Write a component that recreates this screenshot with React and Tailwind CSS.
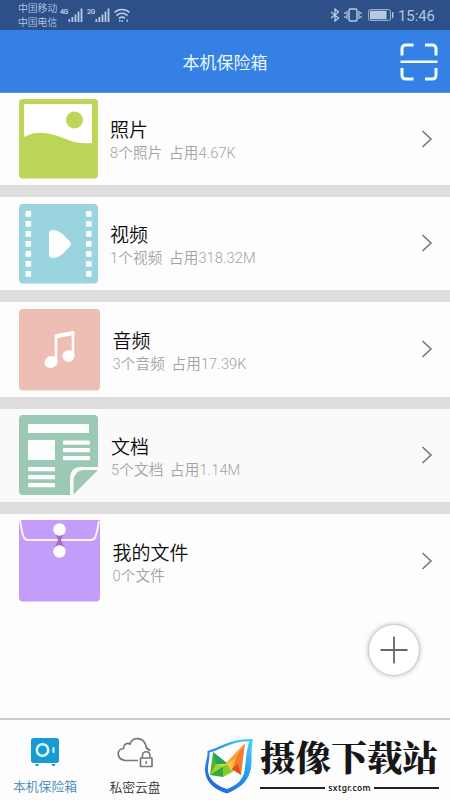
import React from "react";

function Signal() {
  return (
    <svg width="15" height="14" viewBox="0 0 15 14" fill="#b9cbe6">
      <rect x="0.5" y="11" width="1.6" height="3" />
      <rect x="3.5" y="9" width="1.8" height="5" />
      <rect x="6.6" y="6.5" width="1.8" height="7.5" />
      <rect x="9.6" y="3.5" width="1.8" height="10.5" />
      <rect x="12.6" y="0.5" width="1.8" height="13.5" />
    </svg>
  );
}

function StatusBar() {
  return (
    <div className="flex h-[30px] items-start bg-[#2d5088] text-[#b3c5e2]">
      <div className="ml-[18px] w-[42px] pt-[2px] text-[9.8px] leading-[13.5px] font-[350] whitespace-nowrap">
        <div>中国移动</div>
        <div>中国电信</div>
      </div>
      <div className="mt-[8px] w-[8px] text-[7px] leading-[8px] font-bold tracking-[-0.5px]">4G</div>
      <div className="mt-2"><Signal /></div>
      <div className="mt-[8px] ml-[4px] w-[8px] text-[7px] leading-[8px] font-bold tracking-[-0.5px]">2G</div>
      <div className="mt-2"><Signal /></div>
      <svg className="mt-[8px] ml-[3px]" width="18" height="15" viewBox="0 0 18 15" fill="none" stroke="#b9cbe6" strokeWidth="1.5">
        <path d="M1.500 4.600C5.500.5 12.500.5 16.500 4.600" />
        <path d="M3.500 7.600C6.800 4.600 11.200 4.600 14.500 7.600" />
        <path d="M6 10.400C7.800 8.900 10.200 8.900 12 10.400" />
        <path d="M6.800 11.800v2.200M9.200 12v2M14.200 11.500v2.500" strokeWidth="1.200" />
      </svg>
      <div className="mr-[15px] ml-auto flex h-[30px] items-center">
        <svg width="10" height="14" viewBox="0 0 10 14" fill="none" stroke="#b9cbe6" strokeWidth="1.300">
          <path d="M1 4l7.500 6L5 13V1l3.500 3L1 10" />
        </svg>
        <svg className="ml-[4px]" width="18" height="14" viewBox="0 0 18 14" fill="none" stroke="#b9cbe6" strokeWidth="1.400">
          <rect x="5" y="1" width="8" height="12" rx="1" />
          <path d="M3 3v8M15 3v8" strokeWidth="1.200" />
          <path d="M1 4v2M1 8v2M17 4v2M17 8v2" strokeWidth="1.200" />
        </svg>
        <svg className="ml-[6px]" width="26" height="12" viewBox="0 0 26 12">
          <rect x=".6" y=".6" width="21.800" height="10.800" rx="1.500" fill="none" stroke="#9fb4d6" strokeWidth="1" />
          <rect x="2" y="1.800" width="16.500" height="8.400" fill="#b9c9e0" />
          <rect x="24" y="3" width="1.300" height="6" fill="#b9cbe6" />
        </svg>
        <div className="ml-[4px] w-[37px] pt-[2px] text-[14.800px] leading-5 whitespace-nowrap">15:46</div>
      </div>
    </div>
  );
}

function Header() {
  return (
    <div className="grid h-[63px] grid-cols-[1fr_90px_1fr] items-center border-b border-[#5d93d0] bg-[#3480e5]">
      <div />
      <div className="pt-[3px] text-center text-[17px] leading-6 whitespace-nowrap text-[#eaf8ff]">本机保险箱</div>
      <svg className="mt-[1px] mr-[12px] justify-self-end" width="38" height="38" viewBox="0 0 38 38" fill="none" stroke="#f0ffff" strokeWidth="3">
        <path d="M2 12.500V6q0-4 4-4h7.500M25 2h7q4 0 4 4v6.500M2 25v7q0 4 4 4h7.500M25 36h7q4 0 4-4v-7" />
        <path d="M.5 18.800h37" strokeWidth="2.400" />
      </svg>
    </div>
  );
}

function PhotoIcon() {
  return (
    <svg width="79" height="80" viewBox="0 0 79 80">
      <rect width="79" height="79.500" rx="4" fill="#bbd557" />
      <path d="M5 5h68v39C64 45 56 44 47 40 31 33 17 31 5 38z" fill="#fff" />
      <circle cx="55.500" cy="21" r="8.500" fill="#bbd557" />
    </svg>
  );
}

function VideoIcon() {
  const holes = [7, 17, 27, 37, 47, 57, 67];
  return (
    <svg width="79" height="80" viewBox="0 0 79 80">
      <rect width="79" height="79.500" rx="4" fill="#9ad4df" />
      {holes.map((y) => (
        <g key={y} fill="#fafefe">
          <rect x="6.500" y={y} width="5.600" height="5.800" rx=".5" />
          <rect x="67" y={y} width="5.600" height="5.800" rx=".5" />
        </g>
      ))}
      <path d="M30 29.500Q30 26 34 26Q39 26 44 30.500L50.500 37Q53.500 40 50.500 43L44 49.500Q39 54 34 54Q30 54 30 50z" fill="#fff" />
    </svg>
  );
}

function AudioIcon() {
  return (
    <svg width="82" height="82" viewBox="0 0 82 82">
      <rect width="81" height="81.500" rx="4" fill="#edbeb3" />
      <path d="M37 53V27.500L54 24v23" fill="none" stroke="#fff" strokeWidth="2.600" />
      <path d="M36 27.500L55 23.800" fill="none" stroke="#fff" strokeWidth="4" />
      <ellipse cx="32" cy="53" rx="6.700" ry="5.800" fill="#fff" transform="rotate(-20 32 53)" />
      <ellipse cx="49.500" cy="47" rx="6.200" ry="5.800" fill="#fff" transform="rotate(-20 49.500 47)" />
    </svg>
  );
}

function DocIcon() {
  return (
    <svg width="80" height="80" viewBox="0 0 80 80">
      <path d="M4 0H75q4 0 4 4V52H62Q51 52 51 64V80H4q-4 0-4-4V4Q0 0 4 0z" fill="#9cc9b5" />
      <path d="M79 55L54.500 79.500V66Q55 56 64 55z" fill="#9cc9b5" />
      <g fill="#fcfffd">
        <rect x="9" y="9" width="61" height="9" />
        <rect x="9" y="25" width="27" height="20" />
        <rect x="44" y="25.500" width="27" height="4.200" rx="1" />
        <rect x="44" y="33" width="27" height="4.200" rx="1" />
        <rect x="44" y="41" width="27" height="4.200" rx="1" />
        <rect x="9" y="52" width="27" height="4.200" rx="1" />
        <rect x="9" y="60" width="27" height="4.200" rx="1" />
        <rect x="9" y="68" width="27" height="4.200" rx="1" />
      </g>
    </svg>
  );
}

function FileIcon() {
  return (
    <svg width="82" height="82" viewBox="0 0 82 82">
      <path d="M1 0H81V77.500q0 4-4 4H4q-4 0-4-4V4z" fill="#c39df9" />
      <path d="M1 0C2 6 2.500 11 4.500 16.500Q5.500 20 9 20H72Q75.500 20 76.500 16.500C78.500 11 79 6 80 1" fill="none" stroke="#fff0ff" strokeWidth="2" />
      <path d="M36.500 14h8L42 20l3 7h-9l3-7z" fill="#a26ccb" />
      <circle cx="40.500" cy="9.500" r="6.200" fill="#fff" />
      <circle cx="40.500" cy="31.500" r="6.200" fill="#fff" />
    </svg>
  );
}

function Row({ icon, title, detail, className, textClass, chevronClass }) {
  return (
    <div className={"flex items-start pl-[18.600px] pr-[17px] " + className}>
      <div className="w-[82px] shrink-0">{icon}</div>
      <div className={"whitespace-nowrap " + textClass}>
        <div className="text-[19px] leading-6 font-[350] text-[#0c0c0c]">{title}</div>
        <div className="text-[14.600px] leading-[20px] font-[350] tracking-[0.100px] text-[#a3a3a3] [word-spacing:3px]">{detail}</div>
      </div>
      <svg className={"ml-auto " + chevronClass} width="12" height="18" viewBox="0 0 12 18" fill="none" stroke="#777" strokeWidth="1.600">
        <path d="M1.500 1l8.500 8-8.500 8" />
      </svg>
    </div>
  );
}

function Gap() {
  return <div className="h-[12px] bg-[#dedede]" />;
}

function Watermark() {
  return (
    <div className="flex pt-[18px]">
      <svg width="50" height="58" viewBox="0 0 50 58">
        <defs>
          <linearGradient id="shield" x1="1" y1="0" x2="0.2" y2="1">
            <stop offset="0" stopColor="#4ad4fa" />
            <stop offset=".5" stopColor="#2196ef" />
            <stop offset="1" stopColor="#2862dd" />
          </linearGradient>
        </defs>
        <path fillRule="evenodd" fill="url(#shield)" d="M3.500 13C17 9 25 1 49 1C46 15 49 25 46 34C43 45 34 51 23 55.500C11 52 1 44 1 32C1 24 4 20 3.500 13zM5.500 14.500C6 22 3.500 26 4 33C5 42 13 48 23 51C33 47 39 42 40.500 33C42 23 42 15 45 3.500C27 3 18 11.500 5.500 14.500z" />
        <path d="M9 14L24 26 17 34 6 37z" fill="#4fb335" />
        <path d="M9 14L24 26H12z" fill="#25a55a" />
        <path d="M12 26L6 37l13-8z" fill="#a5d236" />
        <path d="M6 37l13-8v10z" fill="#35a838" />
        <path d="M12 26h12l-5 3z" fill="#c8df3c" />
        <path d="M19 29l5-3 6 7-11 6z" fill="#85cb2e" />
        <path d="M41 5L22 25l6 8z" fill="#f9a032" />
        <path d="M22 25l10-4-4 12z" fill="#ffc444" />
        <path d="M41 5L32 21l-4 12z" fill="#f4622b" />
        <path d="M41 5l-4 32-9-6z" fill="#f67b30" />
        <path d="M34 26l3 11-9-6z" fill="#e6491f" />
      </svg>
      <div className="ml-[6px] w-[179px]">
        <div className="h-[44px] font-['Noto_Serif_CJK_SC','Noto_Sans_CJK_SC',serif] text-[35.600px] leading-[36px] font-black whitespace-nowrap text-[#171717]">摄像下载站</div>
        <div className="flex h-[12px] items-center gap-[3px]">
          <div className="h-[2px] flex-1 bg-[#222]" />
          <div className="pb-[1px] font-['Noto_Sans'] text-[8.400px] leading-[10px] font-semibold tracking-[0.350px] text-[#222]">sxtgr.com</div>
          <div className="h-[2px] w-[65px] bg-[#222]" />
        </div>
      </div>
    </div>
  );
}

function BottomNav() {
  return (
    <div className="flex h-[82px] border-t-2 border-[#cccccc] bg-[#fdfdfd]">
      <div className="flex w-[90px] flex-col items-center pt-[17px]">
        <svg width="28" height="30" viewBox="0 0 28 30">
          <rect y="1" width="28" height="25" rx="2.500" fill="#199bd1" />
          <circle cx="11.500" cy="13" r="5.700" fill="none" stroke="#dcfcff" strokeWidth="2.500" />
          <rect x="21.500" y="10" width="2" height="6" rx="1" fill="#dcfcff" />
          <path d="M4 27h4l-1 2H5zM20.500 27h4l-1 2h-2z" fill="#199bd1" />
        </svg>
        <div className="mt-[10px] text-[12.800px] leading-[20px] font-[350] whitespace-nowrap text-[#4088bf]">本机保险箱</div>
      </div>
      <div className="flex w-[90px] flex-col items-center pt-[17px]">
        <svg width="36" height="31" viewBox="0 0 36 31" fill="none" stroke="#777" strokeWidth="1.700">
          <path d="M21 23.500H8C-1 22-.5 12 6.500 11.500C6.500 7 10 5.500 13 7C15-.5 27-.5 29 9.500Q29.500 12 33.500 13.500" />
          <rect x="23.500" y="21" width="11.500" height="8.500" rx=".5" />
          <path d="M25.500 21v-2.500c0-5 7.500-5 7.500 0V21M29.200 24v3" strokeWidth="1.500" />
        </svg>
        <div className="mt-[10px] text-[12.800px] leading-[20px] font-[350] whitespace-nowrap text-[#333]">私密云盘</div>
      </div>
      <div className="ml-[24px]"><Watermark /></div>
    </div>
  );
}

export default function App() {
  return (
    <div className="relative h-[800px] w-[450px] overflow-hidden bg-[#fdfdfd] font-[Roboto,'Noto_Sans_CJK_SC',sans-serif]">
      <StatusBar />
      <Header />
      <Row icon={<PhotoIcon />} title="照片" detail="8个照片 占用4.67K" className="h-[92px] pt-[6px]" textClass="ml-[9.500px] mt-[20px]" chevronClass="mt-[31px]" />
      <Gap />
      <Row icon={<VideoIcon />} title="视频" detail="1个视频 占用318.32M" className="h-[93px] pt-[7px]" textClass="ml-[9.500px] mt-[20px]" chevronClass="mt-[30px]" />
      <Gap />
      <Row icon={<AudioIcon />} title="音频" detail="3个音频 占用17.39K" className="h-[95px] pt-[7px]" textClass="ml-[12px] mt-[21px]" chevronClass="mt-[31px]" />
      <Gap />
      <Row icon={<DocIcon />} title="文档" detail="5个文档 占用1.14M" className="h-[93px] bg-[#fafafa] pt-[6px]" textClass="ml-[10.500px] mt-[21px]" chevronClass="mt-[31px]" />
      <Gap />
      <Row icon={<FileIcon />} title="我的文件" detail="0个文件" className="h-[204px] pt-[6px]" textClass="ml-[12px] mt-[22px]" chevronClass="mt-[32px]" />
      <BottomNav />
      <div className="absolute top-[624px] left-[368px] flex h-[52px] w-[52px] items-center justify-center rounded-full border border-[#cccccc] bg-white shadow-[0_0_5px_rgba(0,0,0,0.25)]">
        <svg width="28" height="28" viewBox="0 0 28 28" stroke="#666" strokeWidth="1.800">
          <path d="M14 .5v27M.5 14h27" />
        </svg>
      </div>
    </div>
  );
}
